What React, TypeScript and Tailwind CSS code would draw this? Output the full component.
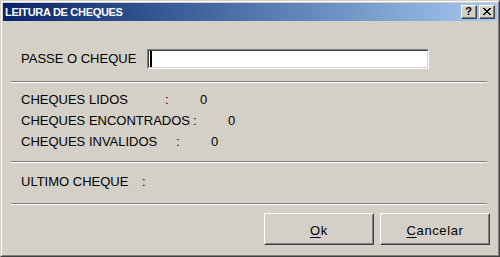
const face = "bg-[#d4d0c8]";

function Separator({ className = "" }: { className?: string }) {
  return <div className={`ml-[9px] w-[476px] h-[2px] border-t border-t-[#808080] border-b border-b-white ${className}`} />;
}

function Btn({ label, mnemonic }: { label: string; mnemonic: string }) {
  const rest = label.slice(1);
  return (
    <button className="w-[110px] h-[32px] border border-t-white border-l-white border-b-[#404040] border-r-[#404040] bg-[#d4d0c8]">
      <div className="w-full h-full border border-t-[#d4d0c8] border-l-[#d4d0c8] border-b-[#808080] border-r-[#808080] flex items-center justify-center pt-[3px] text-[13px] tracking-[0.6px] text-black">
        <span>
          <span className="underline underline-offset-2">{mnemonic}</span>
          {rest}
        </span>
      </div>
    </button>
  );
}

function CaptionButton({ children }: { children: React.ReactNode }) {
  return (
    <div className="w-[16px] h-[14px] bg-[#d4d0c8] border border-t-white border-l-white border-b-[#404040] border-r-[#404040]">
      <div className="w-full h-full border-r border-b border-r-[#808080] border-b-[#808080] flex items-center justify-center">
        {children}
      </div>
    </div>
  );
}

function StatRow({ label, labelW, value }: { label: string; labelW: string; value: string }) {
  return (
    <div className="h-[21px] flex items-center pl-[19px]">
      <span className={labelW}>{label}</span>
      <span className="w-[35px]">:</span>
      <span>{value}</span>
    </div>
  );
}

export default function App() {
  return (
    <div className="w-[500px] h-[257px] font-['Liberation_Sans',Arial,sans-serif] text-black">
      <div className="w-full h-full border border-t-[#d4d0c8] border-l-[#d4d0c8] border-b-[#404040] border-r-[#404040]">
        <div className={`w-full h-full border border-t-white border-l-white border-b-[#808080] border-r-[#808080] ${face} flex flex-col`}>
          {/* title bar */}
          <div className="mx-[1px] mt-[1px] h-[18px] bg-gradient-to-r from-[#0a246a] to-[#a6caf0] flex items-center pl-[2px] pr-[2px]">
            <span className="text-white font-bold text-[11px] tracking-[-0.3px] flex-1">LEITURA DE CHEQUES</span>
            <div className="flex gap-[2px]">
              <CaptionButton>
                <span className="text-[11px] font-bold leading-none text-black -mt-[1px]">?</span>
              </CaptionButton>
              <CaptionButton>
                <svg width="8" height="7" viewBox="0 0 8 7" shapeRendering="crispEdges">
                  <path d="M0 0h2v1h-2zM6 0h2v1h-2zM1 1h2v1h-2zM5 1h2v1h-2zM2 2h4v1h-4zM3 3h2v1h-2zM2 4h4v1h-4zM1 5h2v1h-2zM5 5h2v1h-2zM0 6h2v1h-2zM6 6h2v1h-2z" fill="#000" />
                </svg>
              </CaptionButton>
            </div>
          </div>

          {/* body */}
          <div className="flex flex-col text-[13px]">
            <div className="mt-[28px] h-[20px] flex items-center pl-[19px]">
              <span className="w-[126px]">PASSE O CHEQUE</span>
              <div className="w-[282px] h-[20px] border border-t-[#808080] border-l-[#808080] border-b-white border-r-white">
                <div className="w-full h-full bg-white border border-t-[#404040] border-l-[#404040] border-b-[#d4d0c8] border-r-[#d4d0c8] flex items-center pl-[1px]">
                  <div className="w-[2px] h-[16px] bg-black" />
                </div>
              </div>
            </div>

            <Separator className="mt-[12px]" />

            <div className="mt-[6px]">
              <StatRow label="CHEQUES LIDOS" labelW="w-[144px]" value="0" />
              <StatRow label="CHEQUES ENCONTRADOS" labelW="w-[172px]" value="0" />
              <StatRow label="CHEQUES INVALIDOS" labelW="w-[155px]" value="0" />
            </div>

            <Separator className="mt-[9px]" />

            <div className="mt-[8px] h-[21px] flex items-center pl-[19px]">
              <span className="w-[121px]">ULTIMO CHEQUE</span>
              <span>:</span>
            </div>

            <Separator className="mt-[11px]" />

            <div className="mt-[8px] flex justify-end gap-[6px] pr-[8px]">
              <Btn label="Ok" mnemonic="O" />
              <Btn label="Cancelar" mnemonic="C" />
            </div>
          </div>
        </div>
      </div>
    </div>
  );
}
